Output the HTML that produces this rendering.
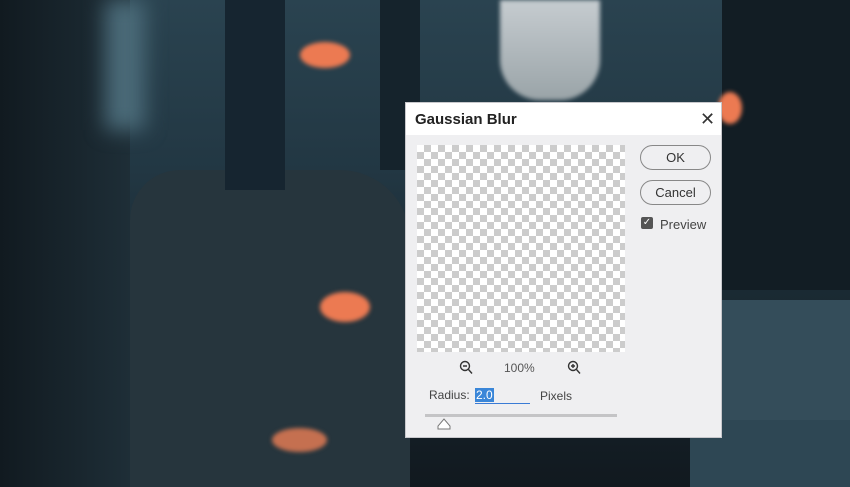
<!DOCTYPE html>
<html><head><style>
body{margin:0;width:850px;height:487px;overflow:hidden;position:relative;font-family:"Liberation Sans",sans-serif;
background:linear-gradient(180deg,#2a4350 0%,#223743 35%,#1a2a33 60%,#11191f 100%);}
.bg{position:absolute;}
.dlg{position:absolute;left:405px;top:102px;width:317px;height:336px;background:#efeff1;border:1px solid #c8c8cc;box-sizing:border-box;}
.tb{position:absolute;left:0;top:0;width:100%;height:32px;background:#fff;}
.tb b{position:absolute;left:9px;top:8px;font-size:15px;color:#222;}
.x{position:absolute;left:294px;top:6px;font-size:18px;color:#333;}
.pv{position:absolute;left:11px;top:42px;width:208px;height:207px;
background-color:#fff;background-image:linear-gradient(45deg,#ccc 25%,transparent 25%,transparent 75%,#ccc 75%),linear-gradient(45deg,#ccc 25%,transparent 25%,transparent 75%,#ccc 75%);
background-size:14px 14px;background-position:0 0,7px 7px;}
.btn{position:absolute;left:234px;width:71px;height:25px;border:1px solid #888;border-radius:13px;box-sizing:border-box;text-align:center;line-height:23px;font-size:13px;color:#333;background:#efeff1;}
.t{position:absolute;font-size:12px;color:#444;}
.f{position:absolute;background:#ec7a52;border-radius:50%;filter:blur(2px);}
</style></head><body>
<div class="bg" style="left:0;top:0;width:130px;height:487px;background:linear-gradient(90deg,#111a20,#1e2e37);"></div>
<div class="bg" style="left:105px;top:0;width:40px;height:130px;background:#4a6a78;filter:blur(10px)"></div>
<div class="bg" style="left:130px;top:170px;width:280px;height:317px;background:#26353d;border-radius:50px 70px 0 0;"></div>
<div class="bg" style="left:225px;top:0;width:60px;height:190px;background:#162530;"></div>
<div class="bg" style="left:380px;top:0;width:40px;height:170px;background:#15232c;"></div>
<div class="bg" style="left:500px;top:0;width:100px;height:100px;background:linear-gradient(#c6ccd0,#9aa4a8);border-radius:0 0 40px 40px;filter:blur(2px)"></div>
<div class="bg" style="left:722px;top:0;width:128px;height:290px;background:#121d24;"></div>
<div class="bg" style="left:722px;top:300px;width:128px;height:120px;background:#344d5a;"></div>
<div class="bg" style="left:690px;top:420px;width:160px;height:67px;background:#2e4754;"></div>
<div class="f" style="left:300px;top:42px;width:50px;height:26px;"></div>
<div class="f" style="left:320px;top:292px;width:50px;height:30px;"></div>
<div class="f" style="left:272px;top:428px;width:55px;height:24px;background:#c57050"></div>
<div class="f" style="left:718px;top:92px;width:24px;height:32px;"></div>
<div class="dlg">
<div class="tb"><b>Gaussian Blur</b><span class="x">✕</span></div>
<div class="pv"></div>
<div class="btn" style="top:42px">OK</div>
<div class="btn" style="top:77px">Cancel</div>
<div style="position:absolute;left:235px;top:114px;width:12px;height:12px;background:#555;border-radius:2px;color:#fff;font-size:10px;line-height:12px;text-align:center">✓</div>
<div class="t" style="left:254px;top:114px;font-size:13px">Preview</div>
<svg style="position:absolute;left:53px;top:257px" width="14" height="15"><circle cx="6" cy="6" r="4.5" fill="none" stroke="#333" stroke-width="1.4"/><path d="M4 6h4M9.5 9.5l3.5 4" stroke="#333" stroke-width="1.4"/></svg>
<div class="t" style="left:98px;top:258px;font-size:12px;color:#555">100%</div>
<svg style="position:absolute;left:161px;top:257px" width="14" height="15"><circle cx="6" cy="6" r="4.5" fill="none" stroke="#333" stroke-width="1.4"/><path d="M4 6h4M6 4v4M9.5 9.5l3.5 4" stroke="#333" stroke-width="1.4"/></svg>
<div class="t" style="left:23px;top:285px">Radius:</div>
<div style="position:absolute;left:69px;top:283px;width:55px;height:17px;border-bottom:1px solid #3a7bd5"><span style="background:#3a86d8;color:#fff;font-size:12px;padding:0 1px">2.0</span></div>
<div class="t" style="left:134px;top:286px">Pixels</div>
<div style="position:absolute;left:19px;top:311px;width:192px;height:3px;background:#c4c4c6"></div>
<svg style="position:absolute;left:31px;top:314px" width="14" height="13"><path d="M1 12h12v-3l-6-7-6 7z" fill="#fff" stroke="#777"/></svg>
</div>
</body></html>
